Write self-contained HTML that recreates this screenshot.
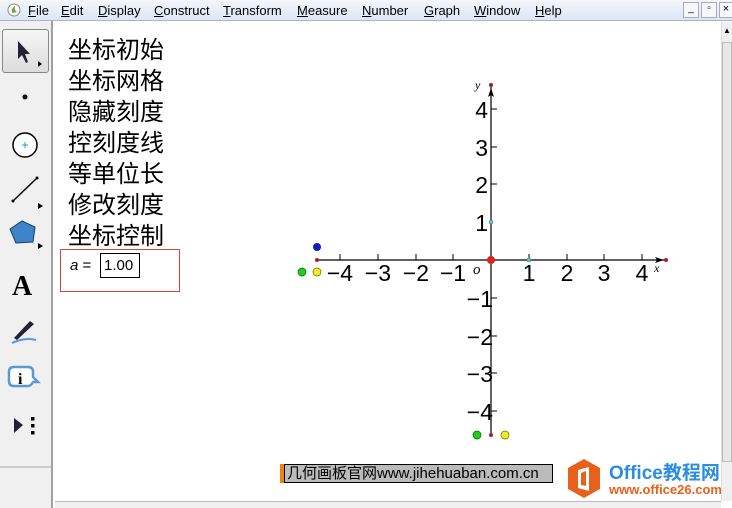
<!DOCTYPE html>
<html><head><meta charset="utf-8"><style>
*{margin:0;padding:0;box-sizing:border-box}
body{width:732px;height:508px;overflow:hidden;background:#fff;font-family:"Liberation Sans","Noto Sans CJK SC",sans-serif;position:relative}
#menu{position:absolute;left:0;top:0;width:732px;height:21px;background:linear-gradient(#f4f7fc,#dde6f3);border-bottom:1px solid #a9b4c4;font-size:13px;color:#000}
#menu span{position:absolute;top:3px}
#tool{position:absolute;left:0;top:21px;width:53px;height:487px;background:#f0f0f0;border-right:2px solid #a0a0a0}
#vs{position:absolute;left:721px;top:22px;width:11px;height:479px;background:#f0f0f0;border-left:1px solid #ddd}
#hs{position:absolute;left:55px;top:501px;width:666px;height:7px;background:#f0f0f0;border-top:1px solid #bbb}
.cj{position:absolute;left:68px;font-size:24px;line-height:31px;color:#000;font-family:"WenQuanYi Zen Hei","Noto Sans CJK SC",sans-serif}
</style></head><body>
<div id="menu">
<svg style="position:absolute;left:7px;top:3px" width="14" height="14"><circle cx="7" cy="7" r="6" fill="#fff" stroke="#888"/><path d="M5 10 Q4 5 8 3 Q7 7 10 9" fill="#6a4" /></svg>
<span style="left:28px"><u>F</u>ile</span><span style="left:61px"><u>E</u>dit</span><span style="left:98px"><u>D</u>isplay</span><span style="left:154px"><u>C</u>onstruct</span><span style="left:223px"><u>T</u>ransform</span><span style="left:297px"><u>M</u>easure</span><span style="left:362px"><u>N</u>umber</span><span style="left:424px"><u>G</u>raph</span><span style="left:474px"><u>W</u>indow</span><span style="left:535px"><u>H</u>elp</span>
<div style="position:absolute;left:683px;top:2px;width:16px;height:16px;border:1px solid #aab;background:#f5f7fb;font-size:10px;text-align:center">_</div>
<div style="position:absolute;left:701px;top:2px;width:16px;height:16px;border:1px solid #aab;background:#f5f7fb;font-size:10px;text-align:center">▫</div>
<div style="position:absolute;left:719px;top:2px;width:14px;height:16px;border:1px solid #aab;background:#f5f7fb;font-size:11px;text-align:center">×</div>
</div>
<div id="tool">
<div style="position:absolute;left:2px;top:8px;width:47px;height:44px;border:1px solid #888;border-radius:3px;background:linear-gradient(#f6f6f6,#dcdcdc)"></div>
<svg width="53" height="487" style="position:absolute;left:0;top:0">
<path d="M18 20 L30 33 L25 33 L28 41 L26 42 L22 34 L18 38 Z" fill="#223"/>
<path d="M38 40 l4 3 l-4 3z" fill="#000"/>
<circle cx="25" cy="76" r="2.5" fill="#000"/>
<circle cx="25" cy="124" r="12" fill="#fff" stroke="#000" stroke-width="1.5"/>
<path d="M22 124h6M25 121v6" stroke="#39c" stroke-width="1"/>
<line x1="13" y1="180" x2="37" y2="157" stroke="#000" stroke-width="1.5"/><circle cx="13" cy="180" r="1.5"/><circle cx="37" cy="157" r="1.5"/>
<path d="M38 182 l5 3 l-5 3z"/>
<path d="M22 200 L35 206 L33 221 L16 222 L10 208 Z" fill="#3d85c6" stroke="#1a3c70" stroke-width="1"/>
<path d="M38 222 l5 3 l-5 3z"/>
<text x="12" y="274" font-family="Liberation Serif" font-weight="bold" font-size="28">A</text>
<path d="M14 317 L30 300 L34 303 L17 319 Z" fill="#223"/><path d="M12 322 Q25 316 36 319" stroke="#5a9ad0" stroke-width="2" fill="none"/>
<path d="M14 346 h14 q5 0 5 5 v5 l5 5 h-5 q-2 4 -5 4 h-14 q-5 0 -5 -5 v-9 q0 -5 5 -5z" fill="#fff" stroke="#5a9ad0" stroke-width="2.5"/>
<text x="18" y="363" font-family="Liberation Serif" font-weight="bold" font-size="16">i</text>
<path d="M14 397 L23 404 L14 412Z" fill="#223"/><rect x="31" y="396" width="3.5" height="3.5"/><rect x="31" y="403" width="3.5" height="3.5"/><rect x="31" y="410" width="3.5" height="3.5"/>
<line x1="0" y1="446" x2="53" y2="446" stroke="#aaa"/>
</svg>
</div>
<div class="cj" style="top:32px">坐标初始</div>
<div class="cj" style="top:63px">坐标网格</div>
<div class="cj" style="top:94px">隐藏刻度</div>
<div class="cj" style="top:125px">控刻度线</div>
<div class="cj" style="top:156px">等单位长</div>
<div class="cj" style="top:187px">修改刻度</div>
<div class="cj" style="top:218px">坐标控制</div>
<div style="position:absolute;left:60px;top:249px;width:120px;height:43px;border:1px solid #c44"></div>
<div style="position:absolute;left:70px;top:257px;font-size:15px"><i>a</i> =</div>
<div style="position:absolute;left:100px;top:253px;width:40px;height:25px;border:1px solid #000;font-size:15px;padding:3px 0 0 3px">1.00</div>
<svg width="732" height="508" style="position:absolute;left:0;top:0" font-family="Liberation Sans" font-size="23">
<line x1="317" y1="260" x2="666" y2="260" stroke="#000" stroke-width="1.2"/>
<line x1="491" y1="86" x2="491" y2="435" stroke="#000" stroke-width="1.2"/>
<path d="M655 257 L664 260 L655 263 L657 260Z" fill="#000"/>
<path d="M488 97 L491 88 L494 97 L491 95Z" fill="#000"/>
<g stroke="#000">
<line x1="340" y1="254" x2="340" y2="260"/><line x1="378" y1="254" x2="378" y2="260"/><line x1="416" y1="254" x2="416" y2="260"/><line x1="453" y1="254" x2="453" y2="260"/>
<line x1="529" y1="254" x2="529" y2="260"/><line x1="567" y1="254" x2="567" y2="260"/><line x1="604" y1="254" x2="604" y2="260"/><line x1="642" y1="254" x2="642" y2="260"/>
<line x1="491" y1="109" x2="497" y2="109"/><line x1="491" y1="147" x2="497" y2="147"/><line x1="491" y1="184" x2="497" y2="184"/>
<line x1="491" y1="298" x2="497" y2="298"/><line x1="491" y1="336" x2="497" y2="336"/><line x1="491" y1="373" x2="497" y2="373"/><line x1="491" y1="411" x2="497" y2="411"/>
</g>
<g text-anchor="middle">
<text x="340" y="281">−4</text><text x="378" y="281">−3</text><text x="416" y="281">−2</text><text x="453" y="281">−1</text>
<text x="529" y="281">1</text><text x="567" y="281">2</text><text x="604" y="281">3</text><text x="642" y="281">4</text>
</g>
<g text-anchor="end">
<text x="488" y="118">4</text><text x="488" y="156">3</text><text x="488" y="193">2</text><text x="488" y="231">1</text>
<text x="493" y="307">−1</text><text x="493" y="345">−2</text><text x="493" y="382">−3</text><text x="493" y="420">−4</text>
</g>
<text x="473" y="274" font-family="Liberation Serif" font-style="italic" font-size="15">o</text>
<text x="475" y="89" font-family="Liberation Serif" font-style="italic" font-size="12">y</text>
<text x="654" y="272" font-family="Liberation Serif" font-style="italic" font-size="12">x</text>
<circle cx="491" cy="85" r="2" fill="#a22"/><circle cx="666" cy="260" r="2" fill="#a22"/><circle cx="317" cy="260" r="2" fill="#a22"/><circle cx="491" cy="435" r="2" fill="#a22"/>
<circle cx="491" cy="260" r="4" fill="#e02020"/>
<circle cx="529" cy="260" r="2" fill="#6cc" stroke="#366" stroke-width=".5"/><circle cx="491" cy="222" r="2" fill="#6cc" stroke="#366" stroke-width=".5"/>
<circle cx="317" cy="247" r="4" fill="#1020c0"/>
<circle cx="302" cy="272" r="4" fill="#2c2" stroke="#060" stroke-width=".7"/><circle cx="317" cy="272" r="4" fill="#ee2" stroke="#660" stroke-width=".7"/>
<circle cx="477" cy="435" r="4" fill="#2c2" stroke="#060" stroke-width=".7"/><circle cx="505" cy="435" r="4" fill="#ee2" stroke="#660" stroke-width=".7"/>
</svg>
<div style="position:absolute;left:280px;top:464px;width:4px;height:19px;background:#f08010"></div>
<div style="position:absolute;left:284px;top:464px;width:269px;height:19px;background:#bbb;border:1px solid #000;font-size:15px;line-height:17px;padding-left:2px;white-space:nowrap">几何画板官网www.jihehuaban.com.cn</div>
<svg width="50" height="50" style="position:absolute;left:565px;top:458px"><path d="M19 1 L35 10 L35 31 L19 40 L3 31 L3 10Z" fill="#e8611a"/><path d="M13 12 L24 9 L24 33 L13 30Z M16 15 V27 L21 28 V13Z" fill="#fff"/></svg>
<div style="position:absolute;left:609px;top:458px;font-size:19px;font-weight:bold;color:#2a8de0;white-space:nowrap">Office教程网</div>
<div style="position:absolute;left:609px;top:482px;font-size:13px;font-weight:bold;color:#e8611a;white-space:nowrap">www.office26.com</div>
<div id="vs"><div style="font-size:8px;text-align:center;margin-top:4px">▲</div><div style="position:absolute;left:0;top:20px;width:10px;height:420px;border:1px solid #bbb;background:#e8e8e8"></div></div>
<div id="hs"></div>
</body></html>
